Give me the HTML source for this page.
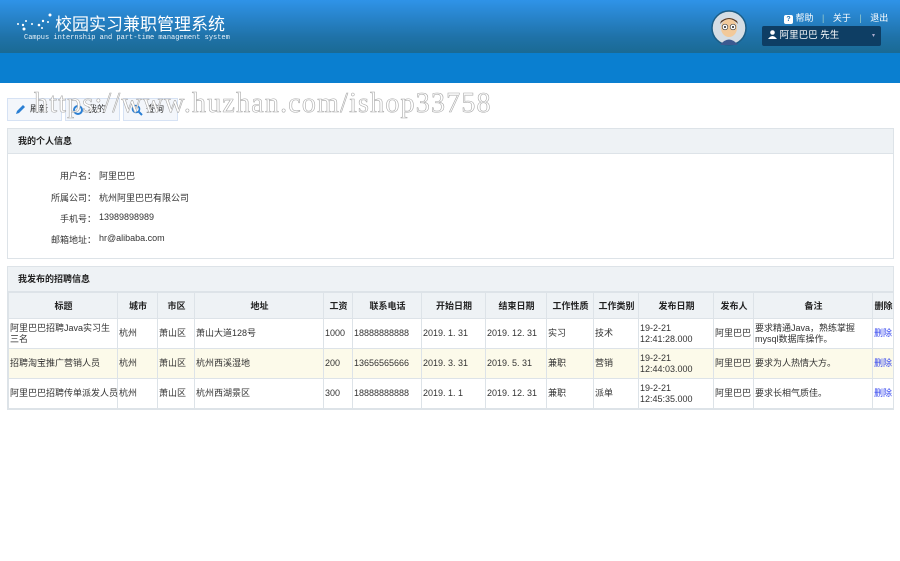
<!DOCTYPE html>
<html><head><meta charset="utf-8">
<style>
*{margin:0;padding:0;box-sizing:border-box}
body{width:900px;height:561px;background:#fff;font-family:"Liberation Sans","Noto Sans CJK SC",sans-serif;font-size:9px;color:#333;position:relative;overflow:hidden}
.hdr{position:absolute;left:0;top:0;width:900px;height:53px;background:linear-gradient(#2f93e8,#1f72a8 70%,#1a6a94)}
.band{position:absolute;left:0;top:53px;width:900px;height:30px;background:#0a7fd0}
.title{position:absolute;left:55px;top:10px;color:#fff;font-size:17px;font-family:"Liberation Sans","Noto Sans CJK SC",sans-serif}
.sub{position:absolute;left:24px;top:34px;color:#e8f2fa;font-family:"Liberation Mono",monospace;font-size:7px}
.btn{position:absolute;top:98px;height:23px;border:1px solid #d6e2f4;background:#f3f6fb;font-size:9px;line-height:21px;padding-left:22px}
.wm{position:absolute;left:34px;top:88px;font-family:"Liberation Serif",serif;font-size:28px;color:#fff;-webkit-text-stroke:0.6px #aaa;letter-spacing:1.2px;white-space:nowrap}
.panel{position:absolute;left:7px;width:887px;border:1px solid #dde3e8;background:#fff}
.ph{height:25px;background:#eef2f5;border-bottom:1px solid #dde3e8;font-weight:bold;line-height:25px;padding-left:10px;font-size:9px;color:#222}
.info{position:absolute;font-size:9px}
table{border-collapse:collapse;table-layout:fixed;width:885px}
td,th{border:1px solid #dde3e8;font-size:9px;padding:0 0 0 1px;vertical-align:middle}
th{height:26px;background:#eef2f5;font-weight:bold;color:#222}
td{height:30px;line-height:11px}
tr.y td{background:#fcfaea}
.del{color:#3344ee}
</style></head><body>
<div class="hdr"></div>
<div class="band"></div>
<svg style="position:absolute;left:14px;top:10px" width="44" height="24"><g fill="#fff"><circle cx="4" cy="14" r="1"/><circle cx="9" cy="15" r="1.2"/><circle cx="12" cy="11" r="1"/><circle cx="10" cy="19" r="1.5"/><circle cx="18" cy="14" r="1"/><circle cx="25" cy="15" r="1.3"/><circle cx="29" cy="11" r="1.2"/><circle cx="28" cy="18" r="1"/><circle cx="36" cy="5" r="1.5"/><circle cx="34" cy="12" r="1"/></g></svg>
<div class="title">校园实习兼职管理系统</div>
<div class="sub">Campus internship and part-time management system</div>
<svg style="position:absolute;left:711px;top:10px" width="36" height="36"><circle cx="18" cy="18" r="17" fill="#d5dde4" stroke="#1c5d86" stroke-width="1.5"/><path d="M9 35 Q18 24 27 35Z" fill="#3c5a90"/><ellipse cx="18" cy="18" rx="8" ry="9" fill="#f2c99a"/><path d="M9 14 Q18 4 27 14 L26 11 Q18 5 10 11Z" fill="#5a3a22"/><circle cx="14" cy="17" r="2.8" fill="#fff" stroke="#333" stroke-width=".6"/><circle cx="22" cy="17" r="2.8" fill="#fff" stroke="#333" stroke-width=".6"/><circle cx="14" cy="17" r="1" fill="#222"/><circle cx="22" cy="17" r="1" fill="#222"/></svg>
<div style="position:absolute;left:784px;top:11px;color:#fff;font-size:9px"><span style="display:inline-block;width:9px;height:9px;background:#fff;color:#1f6fb0;font-size:7px;text-align:center;line-height:9px;border-radius:2px;font-weight:bold">?</span> 帮助 <span style="color:#9cc;margin:0 6px">|</span> 关于 <span style="color:#9cc;margin:0 6px">|</span> 退出</div>
<div style="position:absolute;left:762px;top:26px;width:119px;height:20px;background:#0e3e64;border-radius:2px;color:#fff;font-size:9.5px;line-height:20px;padding-left:6px">
<svg width="9" height="9" style="vertical-align:-1px"><circle cx="4.5" cy="2.5" r="2.3" fill="#fff"/><path d="M0 9 Q4.5 3 9 9Z" fill="#fff"/></svg> 阿里巴巴 先生<span style="position:absolute;right:6px;top:0;font-size:6px;color:#aac">▾</span></div>

<div class="btn" style="left:7px;width:55px"><svg style="position:absolute;left:7px;top:5px" width="11" height="11"><path d="M1 10 L2 7 L8 1 L10 3 L4 9Z" fill="#2a7fd4"/></svg>刷新</div>
<div class="btn" style="left:65px;width:55px"><svg style="position:absolute;left:6px;top:5px" width="12" height="12"><circle cx="6" cy="6" r="4" fill="none" stroke="#2a7fd4" stroke-width="2"/></svg>我的</div>
<div class="btn" style="left:123px;width:55px"><svg style="position:absolute;left:7px;top:5px" width="12" height="12"><circle cx="5" cy="5" r="3.5" fill="none" stroke="#2a7fd4" stroke-width="1.6"/><path d="M7.5 7.5 L11 11" stroke="#2a7fd4" stroke-width="2"/></svg>查询</div>
<div class="wm">https://www.huzhan.com/ishop33758</div>

<div class="panel" style="top:128px;height:131px"><div class="ph">我的个人信息</div>
<div class="info" style="left:0;top:40px;width:88px;text-align:right">用户名：</div><div class="info" style="left:91px;top:40px">阿里巴巴</div>
<div class="info" style="left:0;top:62px;width:88px;text-align:right">所属公司：</div><div class="info" style="left:91px;top:62px">杭州阿里巴巴有限公司</div>
<div class="info" style="left:0;top:83px;width:88px;text-align:right">手机号：</div><div class="info" style="left:91px;top:83px">13989898989</div>
<div class="info" style="left:0;top:104px;width:88px;text-align:right">邮箱地址：</div><div class="info" style="left:91px;top:104px">hr@alibaba.com</div>
</div>

<div class="panel" style="top:266px;height:144px"><div class="ph">我发布的招聘信息</div>
<table>
<colgroup><col style="width:109px"><col style="width:40px"><col style="width:37px"><col style="width:129px"><col style="width:29px"><col style="width:69px"><col style="width:64px"><col style="width:61px"><col style="width:47px"><col style="width:45px"><col style="width:75px"><col style="width:40px"><col style="width:119px"><col style="width:21px"></colgroup>
<tr><th>标题</th><th>城市</th><th>市区</th><th>地址</th><th>工资</th><th>联系电话</th><th>开始日期</th><th>结束日期</th><th>工作性质</th><th>工作类别</th><th>发布日期</th><th>发布人</th><th>备注</th><th>删除</th></tr>
<tr><td>阿里巴巴招聘Java实习生三名</td><td>杭州</td><td>萧山区</td><td>萧山大道128号</td><td>1000</td><td>18888888888</td><td>2019. 1. 31</td><td>2019. 12. 31</td><td>实习</td><td>技术</td><td>19-2-21<br>12:41:28.000</td><td>阿里巴巴</td><td>要求精通Java，熟练掌握mysql数据库操作。</td><td class="del">删除</td></tr>
<tr class="y"><td>招聘淘宝推广营销人员</td><td>杭州</td><td>萧山区</td><td>杭州西溪湿地</td><td>200</td><td>13656565666</td><td>2019. 3. 31</td><td>2019. 5. 31</td><td>兼职</td><td>营销</td><td>19-2-21<br>12:44:03.000</td><td>阿里巴巴</td><td>要求为人热情大方。</td><td class="del">删除</td></tr>
<tr><td style="white-space:nowrap">阿里巴巴招聘传单派发人员</td><td>杭州</td><td>萧山区</td><td>杭州西湖景区</td><td>300</td><td>18888888888</td><td>2019. 1. 1</td><td>2019. 12. 31</td><td>兼职</td><td>派单</td><td>19-2-21<br>12:45:35.000</td><td>阿里巴巴</td><td>要求长相气质佳。</td><td class="del">删除</td></tr>
</table></div>
</body></html>
